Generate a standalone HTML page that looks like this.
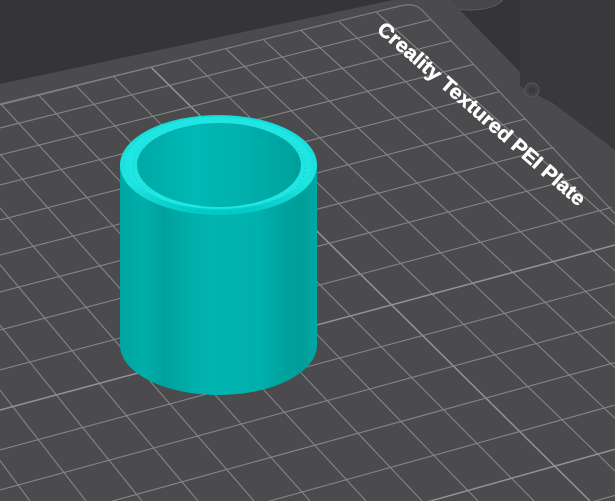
<!DOCTYPE html>
<html><head><meta charset="utf-8">
<style>
html,body{margin:0;padding:0;background:#353437;overflow:hidden;width:615px;height:501px}
svg{display:block}
</style></head>
<body>
<svg width="615" height="501" viewBox="0 0 615 501" xmlns="http://www.w3.org/2000/svg">
<defs>
<clipPath id="gc"><path d="M0,104 L400,6 Q414,2 422,10 L700,300 L700,501 L0,501 Z"/></clipPath>
<linearGradient id="body" x1="0" x2="1" y1="0" y2="0">
<stop offset="0" stop-color="#00a5a1"/>
<stop offset="0.12" stop-color="#00aeaa"/>
<stop offset="0.22" stop-color="#00a29e"/>
<stop offset="0.45" stop-color="#00b4b0"/>
<stop offset="0.7" stop-color="#00b0ac"/>
<stop offset="0.82" stop-color="#00a4a0"/>
<stop offset="0.92" stop-color="#009d99"/>
<stop offset="1" stop-color="#00a9a5"/>
</linearGradient>
<linearGradient id="inner" x1="0" x2="1">
<stop offset="0" stop-color="#00a9a6"/>
<stop offset="0.35" stop-color="#00b8b4"/>
<stop offset="0.6" stop-color="#00b2ae"/>
<stop offset="1" stop-color="#00a09c"/>
</linearGradient>
<linearGradient id="rim" x1="0" x2="0" y1="0" y2="1">
<stop offset="0" stop-color="#14dcd8"/>
<stop offset="0.7" stop-color="#1ee4e0"/>
<stop offset="1" stop-color="#00c8c4"/>
</linearGradient>
</defs>
<rect width="615" height="501" fill="#353437"/>
<path d="M520,0 L615,0 L615,160 L555,103 L520,85 Z" fill="#39383b"/>
<ellipse cx="470" cy="-4" rx="34" ry="14" fill="#47464a" stroke="#5a595c" stroke-width="1"/>
<path d="M0,84 L440,-10 L450,0 L520,72 L520,86 L553,103 L615,150 L615,501 L0,501 Z" fill="#4b4a4d"/>
<circle cx="532" cy="90" r="7" fill="#434245" stroke="#5a595c"/>
<circle cx="532" cy="90" r="3" fill="#3a393c"/>
<g clip-path="url(#gc)" stroke="#858488" stroke-width="1.1" fill="none">
<line x1="-298.5" y1="178.4" x2="-82" y2="501"/>
<line x1="-261" y1="169.2" x2="-26" y2="501"/>
<line x1="-223.5" y1="160" x2="30" y2="501"/>
<line x1="-186" y1="150.8" x2="86" y2="501"/>
<line x1="-148.5" y1="141.5" x2="142" y2="501"/>
<line x1="-111" y1="132.3" x2="198" y2="501"/>
<line x1="-73.5" y1="123.1" x2="254" y2="501"/>
<line x1="-36" y1="113.9" x2="310" y2="501"/>
<line x1="1.5" y1="104.6" x2="366" y2="501"/>
<line x1="39" y1="95.4" x2="422" y2="501"/>
<line x1="76.5" y1="86.2" x2="478" y2="501"/>
<line x1="114" y1="77" x2="534" y2="501"/>
<line x1="151.5" y1="67.7" x2="590" y2="501" stroke="#939296" stroke-width="1.5"/>
<line x1="189" y1="58.5" x2="646" y2="501"/>
<line x1="226.5" y1="49.3" x2="702" y2="501"/>
<line x1="264" y1="40.1" x2="758" y2="501"/>
<line x1="301.5" y1="30.8" x2="814" y2="501"/>
<line x1="339" y1="21.6" x2="870" y2="501"/>
<line x1="376.5" y1="12.4" x2="926" y2="501"/>
<line x1="0" y1="105" x2="615" y2="-48.8"/>
<line x1="0" y1="128" x2="615" y2="-26.6"/>
<line x1="0" y1="155" x2="615" y2="-0.6"/>
<line x1="0" y1="185" x2="615" y2="28.3"/>
<line x1="0" y1="220" x2="615" y2="62"/>
<line x1="0" y1="255" x2="615" y2="95.7"/>
<line x1="0" y1="292" x2="615" y2="131.4"/>
<line x1="0" y1="330" x2="615" y2="168"/>
<line x1="0" y1="370" x2="615" y2="206.5"/>
<line x1="0" y1="410" x2="615" y2="245" stroke="#939296" stroke-width="1.5"/>
<line x1="0" y1="450" x2="615" y2="283.5"/>
<line x1="0" y1="490" x2="615" y2="322"/>
<line x1="0" y1="532" x2="615" y2="362.5"/>
<line x1="0" y1="576" x2="615" y2="405"/>
<line x1="0" y1="622" x2="615" y2="449.2" stroke="#939296" stroke-width="1.5"/>
<line x1="0" y1="670" x2="615" y2="495.4"/>
<line x1="0" y1="720" x2="615" y2="543.6"/>
</g>
<path d="M0,104 L400,6 Q414,2 422,10 L640,240" stroke="#7e7d81" stroke-width="1.2" fill="none"/>
<text transform="translate(376,31) rotate(41)" font-family="Liberation Sans, sans-serif" font-weight="bold" font-size="20" fill="#ffffff" stroke="#ffffff" stroke-width="0.5" textLength="268" lengthAdjust="spacingAndGlyphs">Creality Textured PEI Plate</text>
<path d="M120,165 L120,345 A98.5,50 0 0 0 317,345 L317,165 Z" fill="url(#body)"/>
<ellipse cx="218.5" cy="165" rx="98.5" ry="50" fill="url(#rim)"/>
<ellipse cx="218.5" cy="163" rx="93" ry="46" fill="#1fe6e2"/>
<ellipse cx="219" cy="165" rx="82" ry="42" fill="url(#inner)"/>
<ellipse cx="219" cy="168" rx="86" ry="44" fill="none" stroke="#0a8886" stroke-width="0.6" stroke-dasharray="1 3" opacity="0.6"/>
</svg>
</body></html>
